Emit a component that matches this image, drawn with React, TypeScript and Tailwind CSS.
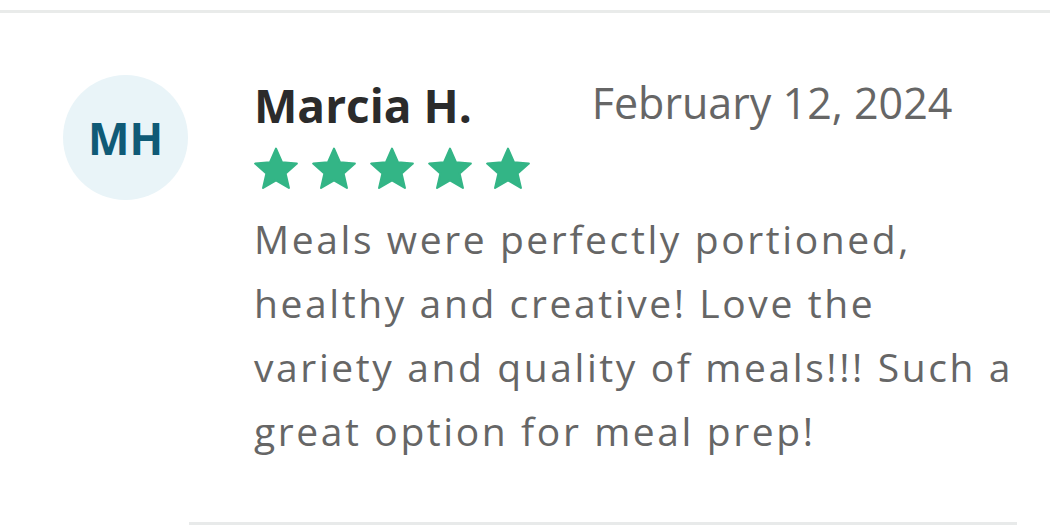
const Star = () => (
  <svg width="50" height="50" viewBox="0 0 24 24" className="shrink-0">
    <path
      d="M12 2.2l2.9 6.6 7.1.6-5.4 4.7 1.6 7-6.2-3.7-6.2 3.7 1.6-7L2 9.4l7.1-.6z"
      fill="#33b586"
      stroke="#33b586"
      strokeWidth="1"
      strokeLinejoin="round"
    />
  </svg>
)

export default function App() {
  return (
    <div className="w-full h-[525px] bg-white overflow-hidden font-['Open_Sans',sans-serif]">
      <div className="pt-[10px]">
        <div className="h-[3px] bg-[#e9ebea]" />
      </div>
      <div className="flex pl-[63px] pt-[62px]">
        <div className="w-[125px] h-[125px] rounded-full bg-[#e9f4f8] flex items-center justify-center shrink-0">
          <span className="text-[44px] font-bold text-[#0f5a76]">MH</span>
        </div>
        <div className="ml-[66px] flex-1">
          <div className="flex items-start">
            <h2 className="text-[46px] leading-[60px] font-bold text-[#2b2b2b]">Marcia H.</h2>
            <span className="ml-[120px] text-[43px] leading-[60px] text-[#666666] -mt-[2px]">February 12, 2024</span>
          </div>
          <div className="flex gap-[8px] mt-[9px] -ml-[3px]">
            <Star />
            <Star />
            <Star />
            <Star />
            <Star />
          </div>
          <p className="mt-[13px] text-[39px] tracking-[2.6px] leading-[64px] text-[#666666] whitespace-nowrap">
            Meals were perfectly portioned,
            <br />
            healthy and creative! Love the
            <br />
            variety and quality of meals!!! Such a
            <br />
            great option for meal prep!
          </p>
        </div>
      </div>
      <div className="ml-[189px] w-[828px] mt-[59px] h-[4px] bg-[#e8eaea]" />
    </div>
  )
}
